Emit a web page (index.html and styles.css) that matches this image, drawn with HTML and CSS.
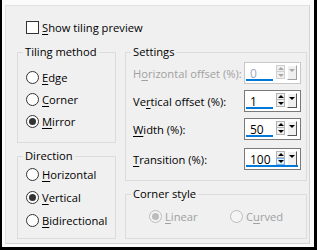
FILE: index.html
```html
<!DOCTYPE html>
<html lang="en">
<head>
    <meta charset="UTF-8">
    <title>Tiling</title>
    <link rel="stylesheet" href="styles.css">
</head>
<body>
    <div class="window">
        <div class="panel">
            <div class="check-row">
                <span class="checkbox"></span>
                <span><u>S</u>how tiling preview</span>
            </div>

            <div class="columns">
                <div class="col">
                    <fieldset class="group tiling">
                        <legend>Tiling method</legend>
                        <div class="option"><span class="radio"></span><span><u>E</u>dge</span></div>
                        <div class="option"><span class="radio"></span><span><u>C</u>orner</span></div>
                        <div class="option"><span class="radio checked"></span><span><u>M</u>irror</span></div>
                    </fieldset>

                    <fieldset class="group direction">
                        <legend>Direction</legend>
                        <div class="option"><span class="radio"></span><span><u>H</u>orizontal</span></div>
                        <div class="option"><span class="radio checked"></span><span><u>V</u>ertical</span></div>
                        <div class="option"><span class="radio"></span><span><u>B</u>idirectional</span></div>
                    </fieldset>
                </div>

                <div class="col">
                    <fieldset class="group settings">
                        <legend>Settings</legend>
                        <div class="field disabled">
                            <span>H<u>o</u>rizontal offset (%):</span>
                            <div class="spin">
                                <span class="value">0</span>
                                <span class="arrows"><span class="up"></span><span class="down"></span></span>
                                <span class="drop"></span>
                            </div>
                        </div>
                        <div class="field">
                            <span>Ve<u>r</u>tical offset (%):</span>
                            <div class="spin">
                                <span class="value">1</span>
                                <span class="arrows"><span class="up"></span><span class="down"></span></span>
                                <span class="drop"></span>
                            </div>
                        </div>
                        <div class="field">
                            <span><u>W</u>idth (%):</span>
                            <div class="spin">
                                <span class="value">50</span>
                                <span class="arrows"><span class="up"></span><span class="down"></span></span>
                                <span class="drop"></span>
                            </div>
                        </div>
                        <div class="field last">
                            <span><u>T</u>ransition (%):</span>
                            <div class="spin focused">
                                <span class="value">100</span>
                                <span class="arrows"><span class="up"></span><span class="down hot"></span></span>
                                <span class="drop"></span>
                            </div>
                        </div>
                    </fieldset>

                    <fieldset class="group corner">
                        <legend>Corner style</legend>
                        <div class="corner-options">
                            <div class="option disabled linear"><span class="radio checked"></span><span><u>L</u>inear</span></div>
                            <div class="option disabled"><span class="radio"></span><span>C<u>u</u>rved</span></div>
                        </div>
                    </fieldset>
                </div>
            </div>
        </div>
    </div>
</body>
</html>
```

FILE: styles.css
```css
/* Dialog frame */
body {
    margin: 0;
    font-family: 'Open Sans', sans-serif;
    font-size: 11.2px;
    color: #000;
    background: #fff;
}

u {
    text-decoration: underline;
    text-underline-offset: 2px;
    text-decoration-thickness: 1px;
}

.window {
    width: 317px;
    height: 250px;
    box-sizing: border-box;
    background: #fbfbfb;
    border-left: 2px solid #000;
    border-right: 3px solid #000;
    border-bottom: 3px solid #000;
    padding: 5px 4px 3px 3px;
}

.panel {
    height: 100%;
    box-sizing: border-box;
    background: #f0f0f0;
    border: 1px solid #e2e2e2;
    border-right-color: #d4d4d4;
    border-bottom-color: #d4d4d4;
    padding: 15px 0 0 11px;
}

/* Checkbox row */
.check-row {
    display: flex;
    align-items: center;
    gap: 3px;
    height: 13px;
    margin: 0 0 11px 9px;
}

.checkbox {
    width: 13px;
    height: 13px;
    box-sizing: border-box;
    border: 1px solid #333;
    background: #fff;
}

/* Group boxes */
.columns {
    display: flex;
    gap: 9px;
}

.col {
    display: flex;
    flex-direction: column;
    gap: 6px;
}

.group {
    margin: 0;
    box-sizing: border-box;
    border: 1px solid #dcdcdc;
    padding: 0 0 0 5px;
    min-width: 0;
}

.group legend {
    padding: 0 2px;
    line-height: 14px;
}

.col:first-child .group {
    width: 99px;
}

.col:last-child .group {
    width: 182px;
}

.tiling {
    height: 98px;
    padding-top: 7px;
}

.direction {
    height: 90px;
}

.direction .option {
    height: 23px;
}

.settings {
    height: 136px;
    padding-top: 3px;
}

.corner {
    height: 52px;
    padding-top: 4px;
}

/* Radio options */
.option {
    display: flex;
    align-items: center;
    gap: 3px;
    height: 22px;
    margin-left: 3px;
    white-space: nowrap;
}

.radio {
    width: 13px;
    height: 13px;
    box-sizing: border-box;
    border: 1px solid #333;
    border-radius: 50%;
    background: #fff;
    display: flex;
    align-items: center;
    justify-content: center;
}

.radio.checked::after {
    content: "";
    width: 7px;
    height: 7px;
    border-radius: 50%;
    background: #333;
}

.corner-options {
    display: flex;
    margin-left: 15px;
}

.option.linear {
    width: 78px;
}

.option.disabled {
    color: #a0a0a0;
}

.option.disabled .radio {
    border-color: #bcbcbc;
    background: #f4f4f4;
}

.option.disabled .radio.checked::after {
    background: #bcbcbc;
}

/* Spin fields */
.field {
    display: flex;
    align-items: center;
    justify-content: space-between;
    height: 22px;
    margin: 0 5px 6px 2px;
    white-space: nowrap;
}

.field.last {
    margin-top: 8px;
}

.field.disabled {
    color: #a0a0a0;
}

.spin {
    position: relative;
    display: flex;
    align-items: center;
    flex: none;
    width: 57px;
    height: 22px;
    box-sizing: border-box;
    border: 1px solid #7a7a7a;
    background: #fff;
    padding: 0 2px 0 1px;
}

.spin::after {
    content: "";
    position: absolute;
    left: 1px;
    bottom: 2px;
    width: 27px;
    height: 2px;
    background: #0078d7;
}

.spin.focused::after {
    width: 52px;
}

.value {
    width: 27px;
    padding-left: 4px;
    box-sizing: border-box;
    color: #000;
    font-size: 12px;
}

.disabled .spin {
    border-color: #c8c8c8;
}

.disabled .value {
    color: #9aa8bc;
}

.arrows {
    display: flex;
    flex-direction: column;
    width: 9px;
    margin-left: 3px;
    margin-top: -2px;
}

.arrows span {
    height: 7px;
    box-sizing: border-box;
    border: 1px solid #b4b4b4;
    background: #f0f0f0;
    display: flex;
    align-items: center;
    justify-content: center;
}

.arrows .down {
    border-top: none;
}

.arrows .down.hot {
    border-color: #7eb4ea;
    border-top: 1px solid #7eb4ea;
    background: #e5f1fb;
}

.arrows .up::after {
    content: "";
    border-left: 3px solid transparent;
    border-right: 3px solid transparent;
    border-bottom: 3px solid #000;
}

.arrows .down::after,
.drop::after {
    content: "";
    border-left: 3px solid transparent;
    border-right: 3px solid transparent;
    border-top: 3px solid #000;
}

.drop {
    width: 10px;
    height: 15px;
    margin-left: 2px;
    margin-top: -2px;
    box-sizing: border-box;
    background: #f0f0f0;
    border-top: 1px solid #fff;
    border-left: 1px solid #fff;
    border-right: 1px solid #555;
    border-bottom: 1px solid #555;
    display: flex;
    justify-content: center;
    padding-top: 3px;
}

.disabled .arrows .up::after {
    border-bottom-color: #a8a8a8;
}

.disabled .arrows .down::after,
.disabled .drop::after {
    border-top-color: #a8a8a8;
}

.disabled .arrows span {
    border-color: #d0d0d0;
}

.disabled .drop {
    border-right-color: #a0a0a0;
    border-bottom-color: #a0a0a0;
}
```
